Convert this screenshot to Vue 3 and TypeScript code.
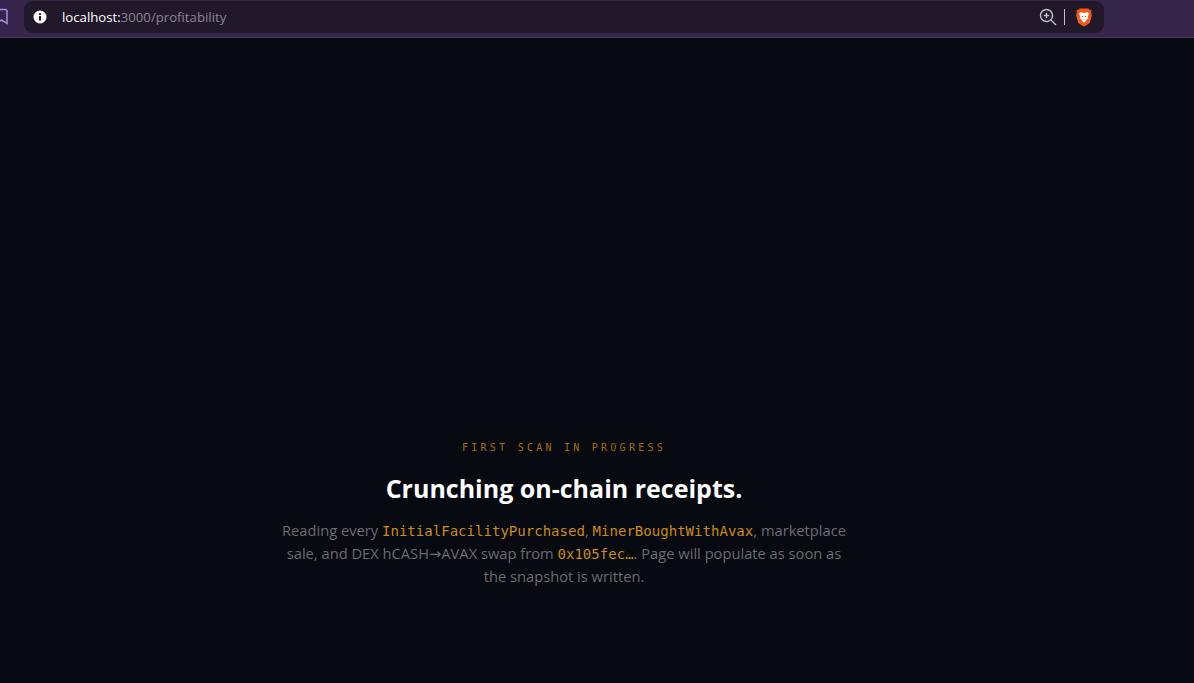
<script setup lang="ts">
const host = 'localhost:'
const rest = '3000/profitability'
</script>

<template>
  <div class="page">
    <header class="chrome">
      <svg class="bookmark" width="10" height="18" viewBox="0 0 10 18">
        <path d="M-4 1.5H5.5a1.5 1.5 0 0 1 1.5 1.5V15.5L1.5 12-4 15.5Z" fill="none" stroke="#a98be0" stroke-width="1.5" />
      </svg>
      <div class="omnibox">
        <svg class="info" width="14" height="14" viewBox="0 0 14 14">
          <circle cx="7" cy="7" r="6.5" fill="#fff" />
          <rect x="6" y="6" width="2" height="4.5" fill="#211829" />
          <rect x="6" y="3.3" width="2" height="1.8" fill="#211829" />
        </svg>
        <div class="url"><span class="host">{{ host }}</span>{{ rest }}</div>
        <svg class="zoom" width="18" height="18" viewBox="0 0 18 18">
          <circle cx="7.5" cy="7.5" r="6" fill="none" stroke="#c4c0c8" stroke-width="1.4" />
          <path d="M7.5 4.8v5.4M4.8 7.5h5.4M12 12l5 5" fill="none" stroke="#c4c0c8" stroke-width="1.4" />
        </svg>
        <span class="divider"></span>
        <svg class="brave" width="16" height="19" viewBox="0 0 16 19">
          <path d="M3.6 0.5h8.8l1.4 1.6 1.7-.2-.3 3.2.7 1.8-2.1 8-4.6 3-1.2.5-1.2-.5-4.6-3-2.1-8 .7-1.8L.5 1.9l1.7.2Z" fill="#f25a1c" />
          <path d="M4.6 4.2l3.4.9 3.4-.9 1.6 1.5-1.4 3.2 1 1.5-2.2 1-.4 1.5L8 14.8l-2-1.9-.4-1.5-2.2-1 1-1.5-1.4-3.2Z" fill="#fff" />
          <path d="M6 8h1.2v1.2H6ZM8.8 8H10v1.2H8.8ZM7 11.2h2l-1 1Z" fill="#f25a1c" />
        </svg>
      </div>
    </header>

    <main class="content">
      <p class="eyebrow">FIRST SCAN IN PROGRESS</p>
      <h1 class="title">Crunching on-chain receipts.</h1>
      <p class="desc">
        Reading every <code>InitialFacilityPurchased</code>, <code>MinerBoughtWithAvax</code>, marketplace
        sale, and DEX hCASH<span class="arrow">→</span>AVAX swap from <code>0x105fec…</code>. Page will populate as soon as
        the snapshot is written.
      </p>
    </main>
  </div>
</template>

<style scoped>
.page {
  height: 683px;
  overflow: hidden;
  display: flex;
  flex-direction: column;
  background: #070910;
  font-family: "Open Sans", "Noto Sans", sans-serif;
}

.chrome {
  height: 38px;
  flex: none;
  display: flex;
  align-items: flex-start;
  box-sizing: border-box;
  padding-top: 1px;
  background: #35254a;
  border-bottom: 1px solid #4a3a5e;
}

.bookmark {
  flex: none;
  margin-top: 7px;
  margin-right: 14px;
}

.omnibox {
  width: 1080px;
  height: 32px;
  display: flex;
  align-items: center;
  box-sizing: border-box;
  padding: 0 12px 0 9px;
  background: #211829;
  border-radius: 9px;
}

.info {
  flex: none;
}

.url {
  flex: 1;
  margin-left: 15px;
  font-size: 13.2px;
  color: #8a8490;
}

.host {
  color: #fff;
}

.zoom {
  flex: none;
}

.divider {
  width: 1px;
  height: 16px;
  margin: 0 11px 0 7px;
  background: #c4c0c8;
}

.content {
  flex: 1;
  display: flex;
  flex-direction: column;
  align-items: center;
  padding-top: 403px;
  padding-right: 66px;
  text-align: center;
}

.eyebrow {
  margin: 0;
  font-family: "DejaVu Sans Mono", monospace;
  font-size: 10px;
  line-height: 14px;
  letter-spacing: 3.25px;
  color: #a66d08;
}

.title {
  margin: 15px 0 0;
  font-size: 25px;
  line-height: 36px;
  font-weight: 700;
  color: #fff;
}

.desc {
  width: 572px;
  margin: 13px 0 0;
  font-size: 14.7px;
  line-height: 23px;
  color: #6b6b72;
}

code {
  font-family: "DejaVu Sans Mono", monospace;
  font-size: 14.05px;
  line-height: 1;
  color: #cc8c0c;
}

.arrow {
  font-family: "DejaVu Sans", sans-serif;
  line-height: 1;
}
</style>

<style>
html, body {
  margin: 0;
  background: #070910;
}
</style>
